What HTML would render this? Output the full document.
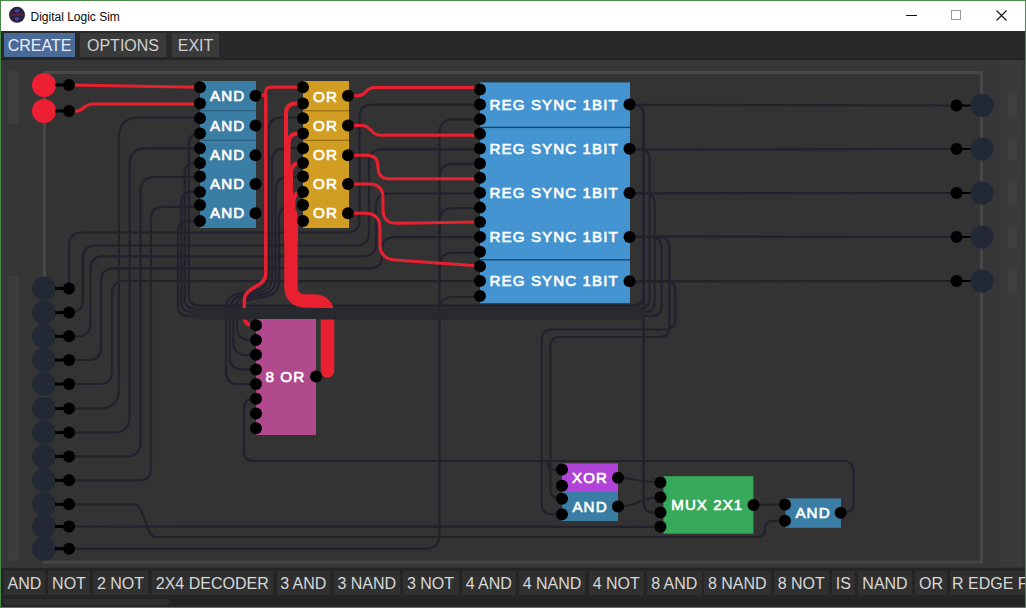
<!DOCTYPE html><html><head><meta charset="utf-8"><style>
html,body{margin:0;padding:0;width:1026px;height:608px;overflow:hidden;background:#333;font-family:"Liberation Sans",sans-serif;}
.a{position:absolute;}
.mb{position:absolute;top:33px;height:24px;background:#3a3a3a;color:#d0d0d0;font-size:16px;line-height:25px;text-align:center;}
.tb{position:absolute;top:570.5px;height:24px;background:#303030;color:#d8d8d8;font-size:16px;line-height:25px;white-space:nowrap;overflow:hidden;text-align:center;}
svg{position:absolute;left:0;top:0;}
.g{font-weight:bold;fill:#fff;font-size:14px;font-family:"Liberation Sans",sans-serif;}
</style></head><body><svg width="1026" height="608"><rect x="0" y="60" width="1026" height="507" fill="#363636"/><rect x="44.5" y="72.5" width="937" height="489.5" fill="#333333" stroke="#474747" stroke-width="3"/><rect x="9" y="72" width="9" height="25.5" fill="#3d3d3d" stroke="#444" stroke-width="0.8"/><rect x="9" y="98" width="9" height="25" fill="#3d3d3d" stroke="#444" stroke-width="0.8"/><rect x="9" y="276" width="9" height="284" fill="#3c3c3c" stroke="#424242" stroke-width="0.8"/><rect x="1000" y="60" width="22" height="507" fill="#3a3a3a"/><rect x="1008" y="94.0" width="9" height="23" rx="2" fill="#3f3f3f"/><rect x="1008" y="137.5" width="9" height="23" rx="2" fill="#3f3f3f"/><rect x="1008" y="181.5" width="9" height="23" rx="2" fill="#3f3f3f"/><rect x="1008" y="225.5" width="9" height="23" rx="2" fill="#3f3f3f"/><rect x="1008" y="269.5" width="9" height="23" rx="2" fill="#3f3f3f"/><path d="M69.0 288.4 L69.0 245.5 Q69.0 232.5 82.0 232.5 L346.5 232.5 Q359.5 232.5 359.5 219.5 L359.5 117.6 Q359.5 104.6 372.5 104.6 L480.0 104.6" fill="none" stroke="#22212d" stroke-width="2.2" stroke-linecap="round" stroke-linejoin="round"/><path d="M69.0 312.6 L70.0 312.6 Q83.0 312.6 83.0 299.6 L83.0 258.5 Q83.0 245.5 96.0 245.5 L356.0 245.5 Q369.0 245.5 369.0 232.5 L369.0 162.3 Q369.0 149.3 382.0 149.3 L480.0 149.3" fill="none" stroke="#22212d" stroke-width="2.2" stroke-linecap="round" stroke-linejoin="round"/><path d="M69.0 336.3 L77.5 336.3 Q90.5 336.3 90.5 323.3 L90.5 269.3 Q90.5 256.3 103.5 256.3 L363.0 256.3 Q376.0 256.3 376.0 243.3 L376.0 206.5 Q376.0 193.5 389.0 193.5 L480.0 193.5" fill="none" stroke="#22212d" stroke-width="2.2" stroke-linecap="round" stroke-linejoin="round"/><path d="M69.0 360.0 L88.0 360.0 Q101.0 360.0 101.0 347.0 L101.0 281.4 Q101.0 268.4 114.0 268.4 L369.0 268.4 Q382.0 268.4 382.0 255.4 L382.0 250.1 Q382.0 237.1 395.0 237.1 L480.0 237.1" fill="none" stroke="#22212d" stroke-width="2.2" stroke-linecap="round" stroke-linejoin="round"/><path d="M69.0 384.0 L99.0 384.0 Q112.0 384.0 112.0 371.0 L112.0 294.0 Q112.0 281.0 125.0 281.0 L480.0 281.1" fill="none" stroke="#22212d" stroke-width="2.2" stroke-linecap="round" stroke-linejoin="round"/><path d="M200.0 117.5 L139.0 117.5 Q119.0 117.5 119.0 137.5 L119.0 388.5 Q119.0 408.5 99.0 408.5 L69.0 408.5" fill="none" stroke="#22212d" stroke-width="2.2" stroke-linecap="round" stroke-linejoin="round"/><path d="M200.0 148.3 L145.6 148.3 Q129.6 148.3 129.6 164.3 L129.6 416.5 Q129.6 432.5 113.6 432.5 L69.0 432.5" fill="none" stroke="#22212d" stroke-width="2.2" stroke-linecap="round" stroke-linejoin="round"/><path d="M200.0 177.0 L154.5 177.0 Q140.5 177.0 140.5 191.0 L140.5 442.4 Q140.5 456.4 126.5 456.4 L69.0 456.4" fill="none" stroke="#22212d" stroke-width="2.2" stroke-linecap="round" stroke-linejoin="round"/><path d="M200.0 206.8 L163.0 206.8 Q151.0 206.8 151.0 218.8 L151.0 468.3 Q151.0 480.3 139.0 480.3 L69.0 480.3" fill="none" stroke="#22212d" stroke-width="2.2" stroke-linecap="round" stroke-linejoin="round"/><path d="M200.0 133.8 L198.8 133.8 Q188.8 133.8 188.8 143.8 L188.8 295.6 Q188.8 305.6 198.8 305.6 L633.7 305.6 Q643.7 305.6 643.7 295.6 L643.7 115.0 Q643.7 105.0 633.7 105.0 L629.5 105.0" fill="none" stroke="#22212d" stroke-width="2.2" stroke-linecap="round" stroke-linejoin="round"/><path d="M200.0 163.0 L194.7 163.0 Q184.7 163.0 184.7 173.0 L184.7 298.8 Q184.7 308.8 194.7 308.8 L639.6 308.8 Q649.6 308.8 649.6 298.8 L649.6 159.5 Q649.6 149.5 639.6 149.5 L629.5 149.5" fill="none" stroke="#22212d" stroke-width="2.2" stroke-linecap="round" stroke-linejoin="round"/><path d="M200.0 191.7 L191.4 191.7 Q181.4 191.7 181.4 201.7 L181.4 302.0 Q181.4 312.0 191.4 312.0 L644.6 312.0 Q654.6 312.0 654.6 302.0 L654.6 203.3 Q654.6 193.3 644.6 193.3 L629.5 193.3" fill="none" stroke="#22212d" stroke-width="2.2" stroke-linecap="round" stroke-linejoin="round"/><path d="M200.0 221.0 L188.0 221.0 Q178.0 221.0 178.0 231.0 L178.0 306.0 Q178.0 316.0 188.0 316.0 L651.5 316.0 Q661.5 316.0 661.5 306.0 L661.5 247.0 Q661.5 237.0 651.5 237.0 L629.5 237.0" fill="none" stroke="#22212d" stroke-width="2.2" stroke-linecap="round" stroke-linejoin="round"/><path d="M303.0 117.5 L281.5 117.5 Q268.5 117.5 268.5 130.5 L268.5 275.0 Q268.5 288.0 255.7 290.4 L238.8 293.6 Q226.0 296.0 226.0 309.0 L226.0 371.2 Q226.0 384.2 239.0 384.2 L256.0 384.2" fill="none" stroke="#22212d" stroke-width="2.2" stroke-linecap="round" stroke-linejoin="round"/><path d="M303.0 148.3 L285.0 148.3 Q272.0 148.3 272.0 161.3 L272.0 277.0 Q272.0 290.0 259.2 292.4 L242.5 295.6 Q229.7 298.0 229.7 311.0 L229.7 356.4 Q229.7 369.4 242.7 369.4 L256.0 369.4" fill="none" stroke="#22212d" stroke-width="2.2" stroke-linecap="round" stroke-linejoin="round"/><path d="M303.0 177.0 L288.5 177.0 Q275.5 177.0 275.5 190.0 L275.5 279.0 Q275.5 292.0 262.7 294.4 L246.2 297.6 Q233.4 300.0 233.4 313.0 L233.4 342.0 Q233.4 355.0 246.4 355.0 L256.0 355.0" fill="none" stroke="#22212d" stroke-width="2.2" stroke-linecap="round" stroke-linejoin="round"/><path d="M303.0 205.7 L292.0 205.7 Q279.0 205.7 279.0 218.7 L279.0 281.0 Q279.0 294.0 266.2 296.4 L249.8 299.6 Q237.0 302.0 237.0 315.0 L237.0 327.0 Q237.0 340.0 250.0 340.0 L256.0 340.0" fill="none" stroke="#22212d" stroke-width="2.2" stroke-linecap="round" stroke-linejoin="round"/><path d="M480.0 163.8 L453.5 163.8 Q439.5 163.8 439.5 177.8 L439.5 188.8" fill="none" stroke="#22212d" stroke-width="2.2" stroke-linecap="round" stroke-linejoin="round"/><path d="M480.0 208.2 L453.5 208.2 Q439.5 208.2 439.5 222.2 L439.5 233.2" fill="none" stroke="#22212d" stroke-width="2.2" stroke-linecap="round" stroke-linejoin="round"/><path d="M480.0 252.6 L453.5 252.6 Q439.5 252.6 439.5 266.6 L439.5 277.6" fill="none" stroke="#22212d" stroke-width="2.2" stroke-linecap="round" stroke-linejoin="round"/><path d="M480.0 297.0 L453.5 297.0 Q439.5 297.0 439.5 311.0 L439.5 322.0" fill="none" stroke="#22212d" stroke-width="2.2" stroke-linecap="round" stroke-linejoin="round"/><path d="M480.0 119.4 L453.5 119.4 Q439.5 119.4 439.5 133.4 L439.5 534.7 Q439.5 548.7 425.5 548.7 L69.0 548.7" fill="none" stroke="#22212d" stroke-width="2.2" stroke-linecap="round" stroke-linejoin="round"/><path d="M629.5 104.9 L956.5 105.5" fill="none" stroke="#22212d" stroke-width="2.2" stroke-linecap="round" stroke-linejoin="round"/><path d="M629.5 149.7 L956.5 149.0" fill="none" stroke="#22212d" stroke-width="2.2" stroke-linecap="round" stroke-linejoin="round"/><path d="M629.5 193.3 L956.5 193.0" fill="none" stroke="#22212d" stroke-width="2.2" stroke-linecap="round" stroke-linejoin="round"/><path d="M629.5 236.5 L956.5 237.0" fill="none" stroke="#22212d" stroke-width="2.2" stroke-linecap="round" stroke-linejoin="round"/><path d="M629.5 281.4 L956.5 281.0" fill="none" stroke="#22212d" stroke-width="2.2" stroke-linecap="round" stroke-linejoin="round"/><path d="M629.5 105.0 L633.7 105.0 Q643.7 105.0 643.7 115.0 L643.7 502.4 Q643.7 512.4 653.7 512.4 L660.5 512.4" fill="none" stroke="#22212d" stroke-width="2.2" stroke-linecap="round" stroke-linejoin="round"/><path d="M629.5 237.0 L659.4 237.0 Q669.4 237.0 669.4 247.0 L669.4 327.0 Q669.4 337.0 659.4 337.0 L560.4 337.0 Q550.4 337.0 550.4 347.0 L550.4 488.8 Q550.4 498.8 560.4 498.8 L562.0 498.8" fill="none" stroke="#22212d" stroke-width="2.2" stroke-linecap="round" stroke-linejoin="round"/><path d="M629.5 281.4 L665.3 281.4 Q675.3 281.4 675.3 291.4 L675.3 319.5 Q675.3 329.5 665.3 329.5 L551.8 329.5 Q541.8 329.5 541.8 339.5 L541.8 504.2 Q541.8 514.2 551.8 514.2 L562.0 514.2" fill="none" stroke="#22212d" stroke-width="2.2" stroke-linecap="round" stroke-linejoin="round"/><path d="M69.0 526.5 L660.5 526.8" fill="none" stroke="#22212d" stroke-width="2.2" stroke-linecap="round" stroke-linejoin="round"/><path d="M69 504.3 L134 504.3 C145.0 504.3 145.0 537 156 537 L700 537" fill="none" stroke="#22212d" stroke-width="2.2" stroke-linecap="round" stroke-linejoin="round"/><path d="M690.0 537.0 L757.0 537.0 Q765.0 537.0 765.0 529.0 L765.0 528.8 Q765.0 520.8 773.0 520.8 L785.0 520.8" fill="none" stroke="#22212d" stroke-width="2.2" stroke-linecap="round" stroke-linejoin="round"/><path d="M256.0 398.7 L254.0 398.7 Q244.0 398.7 244.0 408.7 L244.0 451.0 Q244.0 461.0 254.0 461.0 L843.5 461.0 Q853.5 461.0 853.5 471.0 L853.5 502.7 Q853.5 512.7 843.5 512.7 L840.6 512.7" fill="none" stroke="#22212d" stroke-width="2.2" stroke-linecap="round" stroke-linejoin="round"/><path d="M530.0 461.0 L543.7 461.0 Q548.0 461.0 548.0 465.3 L548.0 465.3 Q548.0 469.6 552.3 469.6 L562.0 469.6" fill="none" stroke="#22212d" stroke-width="2.2" stroke-linecap="round" stroke-linejoin="round"/><path d="M618 477.8 C635 478 640 482.4 660.5 482.4" fill="none" stroke="#22212d" stroke-width="2.2" stroke-linecap="round" stroke-linejoin="round"/><path d="M618 506.6 C640 506.6 638 497.2 660.5 497.2" fill="none" stroke="#22212d" stroke-width="2.2" stroke-linecap="round" stroke-linejoin="round"/><path d="M753.5 505.0 L785.0 504.6" fill="none" stroke="#22212d" stroke-width="2.2" stroke-linecap="round" stroke-linejoin="round"/><path d="M69.0 85.0 L200.0 87.3" fill="none" stroke="#e9202f" stroke-width="3" stroke-linecap="round" stroke-linejoin="round"/><path d="M69 111 L76 111 C84.0 111 84.0 104 92 104 L200 104" fill="none" stroke="#e9202f" stroke-width="3" stroke-linecap="round" stroke-linejoin="round"/><path d="M255.5 95.7 L261.6 95.7 Q265.8 95.7 265.8 91.5 L265.8 91.5 Q265.8 87.3 270.0 87.3 L303.0 87.3" fill="none" stroke="#e9202f" stroke-width="3" stroke-linecap="round" stroke-linejoin="round"/><path d="M265.8 95.7 L265.8 274 C265.8 287.0 244.3 287.0 244.3 300 L244.3 312" fill="none" stroke="#e9202f" stroke-width="3.5" stroke-linecap="round" stroke-linejoin="round"/><path d="M244.3 310.0 L244.3 316.3 Q244.3 325.3 253.3 325.3 L256.0 325.3" fill="none" stroke="#e9202f" stroke-width="3.5" stroke-linecap="round" stroke-linejoin="round"/><path d="M303.0 103.6 L296.0 103.6 Q286.0 103.6 286.0 113.6 L286.0 240.0" fill="none" stroke="#e9202f" stroke-width="4" stroke-linecap="round" stroke-linejoin="round"/><path d="M303.0 133.4 L298.5 133.4 Q288.5 133.4 288.5 143.4 L288.5 240.0" fill="none" stroke="#e9202f" stroke-width="4" stroke-linecap="round" stroke-linejoin="round"/><path d="M303.0 163.1 L301.0 163.1 Q291.0 163.1 291.0 173.1 L291.0 240.0" fill="none" stroke="#e9202f" stroke-width="4" stroke-linecap="round" stroke-linejoin="round"/><path d="M303.0 192.0 L303.0 192.0 Q293.5 192.0 293.5 201.5 L293.5 240.0" fill="none" stroke="#e9202f" stroke-width="4" stroke-linecap="round" stroke-linejoin="round"/><path d="M303.0 221.0 L303.0 221.0 Q296.0 221.0 296.0 228.0 L296.0 240.0" fill="none" stroke="#e9202f" stroke-width="4" stroke-linecap="round" stroke-linejoin="round"/><path d="M291 215 L291 286 Q291 301 306 301 L313 301 Q327.5 301 327.5 315 L327.5 371" fill="none" stroke="#e9202f" stroke-width="13.5" stroke-linecap="round" stroke-linejoin="round"/><path d="M196.0 313.8 L640.0 313.8" fill="none" stroke="#28282f" stroke-width="11.5" stroke-linecap="round" stroke-linejoin="round"/><path d="M348 95.7 L358 95.7 C366.0 95.7 366.0 87.5 374 87.5 L480 87.5" fill="none" stroke="#e9202f" stroke-width="3" stroke-linecap="round" stroke-linejoin="round"/><path d="M348 125.4 L362 125.4 C371.0 125.4 371.0 135.2 380 135.2 L480 135.2" fill="none" stroke="#e9202f" stroke-width="3" stroke-linecap="round" stroke-linejoin="round"/><path d="M348.0 155.3 L366.5 155.3 Q378.0 155.3 378.0 166.8 L378.0 167.2 Q378.0 178.7 389.5 178.7 L480.0 178.7" fill="none" stroke="#e9202f" stroke-width="3" stroke-linecap="round" stroke-linejoin="round"/><path d="M348.0 184.0 L369.0 184.0 Q383.0 184.0 383.0 198.0 L383.0 209.5 Q383.0 223.5 397.0 223.3 L480.0 222.0" fill="none" stroke="#e9202f" stroke-width="3" stroke-linecap="round" stroke-linejoin="round"/><path d="M348.0 213.2 L365.0 213.2 Q380.0 213.2 380.0 228.2 L380.0 244.0 Q380.0 259.0 395.0 260.0 L480.0 266.0" fill="none" stroke="#e9202f" stroke-width="3" stroke-linecap="round" stroke-linejoin="round"/><circle cx="44" cy="85" r="12" fill="#ec1f33"/><rect x="55" y="83.5" width="9" height="3" fill="#000"/><circle cx="69" cy="85" r="6" fill="#000"/><circle cx="44" cy="111" r="12" fill="#ec1f33"/><rect x="55" y="109.5" width="9" height="3" fill="#000"/><circle cx="69" cy="111" r="6" fill="#000"/><circle cx="44" cy="288.4" r="12" fill="#232934"/><rect x="55" y="286.9" width="9" height="3" fill="#000"/><circle cx="69" cy="288.4" r="6" fill="#000"/><circle cx="44" cy="312.6" r="12" fill="#232934"/><rect x="55" y="311.1" width="9" height="3" fill="#000"/><circle cx="69" cy="312.6" r="6" fill="#000"/><circle cx="44" cy="336.3" r="12" fill="#232934"/><rect x="55" y="334.8" width="9" height="3" fill="#000"/><circle cx="69" cy="336.3" r="6" fill="#000"/><circle cx="44" cy="360" r="12" fill="#232934"/><rect x="55" y="358.5" width="9" height="3" fill="#000"/><circle cx="69" cy="360" r="6" fill="#000"/><circle cx="44" cy="384" r="12" fill="#232934"/><rect x="55" y="382.5" width="9" height="3" fill="#000"/><circle cx="69" cy="384" r="6" fill="#000"/><circle cx="44" cy="408.5" r="12" fill="#232934"/><rect x="55" y="407.0" width="9" height="3" fill="#000"/><circle cx="69" cy="408.5" r="6" fill="#000"/><circle cx="44" cy="432.5" r="12" fill="#232934"/><rect x="55" y="431.0" width="9" height="3" fill="#000"/><circle cx="69" cy="432.5" r="6" fill="#000"/><circle cx="44" cy="456.4" r="12" fill="#232934"/><rect x="55" y="454.9" width="9" height="3" fill="#000"/><circle cx="69" cy="456.4" r="6" fill="#000"/><circle cx="44" cy="480.3" r="12" fill="#232934"/><rect x="55" y="478.8" width="9" height="3" fill="#000"/><circle cx="69" cy="480.3" r="6" fill="#000"/><circle cx="44" cy="504.3" r="12" fill="#232934"/><rect x="55" y="502.8" width="9" height="3" fill="#000"/><circle cx="69" cy="504.3" r="6" fill="#000"/><circle cx="44" cy="526.5" r="12" fill="#232934"/><rect x="55" y="525.0" width="9" height="3" fill="#000"/><circle cx="69" cy="526.5" r="6" fill="#000"/><circle cx="44" cy="548.7" r="12" fill="#232934"/><rect x="55" y="547.2" width="9" height="3" fill="#000"/><circle cx="69" cy="548.7" r="6" fill="#000"/><rect x="960" y="104.5" width="14" height="2" fill="#000"/><circle cx="982" cy="105.5" r="11.5" fill="#232934"/><circle cx="956.5" cy="105.5" r="6" fill="#000"/><rect x="960" y="148" width="14" height="2" fill="#000"/><circle cx="982" cy="149" r="11.5" fill="#232934"/><circle cx="956.5" cy="149" r="6" fill="#000"/><rect x="960" y="192" width="14" height="2" fill="#000"/><circle cx="982" cy="193" r="11.5" fill="#232934"/><circle cx="956.5" cy="193" r="6" fill="#000"/><rect x="960" y="236" width="14" height="2" fill="#000"/><circle cx="982" cy="237" r="11.5" fill="#232934"/><circle cx="956.5" cy="237" r="6" fill="#000"/><rect x="960" y="280" width="14" height="2" fill="#000"/><circle cx="982" cy="281" r="11.5" fill="#232934"/><circle cx="956.5" cy="281" r="6" fill="#000"/><rect x="200" y="81" width="56" height="147" fill="#3b7ea5"/><text class="g" x="210.0" y="101.1" textLength="35.3" lengthAdjust="spacingAndGlyphs" style="font-size:13.8px;font-weight:normal;letter-spacing:1px" stroke="#fff" stroke-width="0.6">AND</text><text class="g" x="210.0" y="130.6" textLength="35.3" lengthAdjust="spacingAndGlyphs" style="font-size:13.8px;font-weight:normal;letter-spacing:1px" stroke="#fff" stroke-width="0.6">AND</text><text class="g" x="210.0" y="160.3" textLength="35.3" lengthAdjust="spacingAndGlyphs" style="font-size:13.8px;font-weight:normal;letter-spacing:1px" stroke="#fff" stroke-width="0.6">AND</text><text class="g" x="210.0" y="189.3" textLength="35.3" lengthAdjust="spacingAndGlyphs" style="font-size:13.8px;font-weight:normal;letter-spacing:1px" stroke="#fff" stroke-width="0.6">AND</text><text class="g" x="210.0" y="218.4" textLength="35.3" lengthAdjust="spacingAndGlyphs" style="font-size:13.8px;font-weight:normal;letter-spacing:1px" stroke="#fff" stroke-width="0.6">AND</text><rect x="200" y="110.10000000000001" width="56" height="1.3" fill="#2c5f80" opacity="1"/><rect x="200" y="139.70000000000002" width="56" height="1.3" fill="#2c5f80" opacity="1"/><circle cx="200" cy="87.3" r="6" fill="#000"/><circle cx="200" cy="103.4" r="6" fill="#000"/><circle cx="200" cy="118.2" r="6" fill="#000"/><circle cx="200" cy="133.4" r="6" fill="#000"/><circle cx="200" cy="148.2" r="6" fill="#000"/><circle cx="200" cy="163.1" r="6" fill="#000"/><circle cx="200" cy="176.5" r="6" fill="#000"/><circle cx="200" cy="192" r="6" fill="#000"/><circle cx="200" cy="205" r="6" fill="#000"/><circle cx="200" cy="221" r="6" fill="#000"/><circle cx="255.5" cy="95.8" r="6" fill="#000"/><circle cx="255.5" cy="125.4" r="6" fill="#000"/><circle cx="255.5" cy="155.3" r="6" fill="#000"/><circle cx="255.5" cy="184" r="6" fill="#000"/><circle cx="255.5" cy="213.2" r="6" fill="#000"/><rect x="303" y="81" width="46" height="147" fill="#d19d22"/><text class="g" x="313.1" y="101.5" textLength="25" lengthAdjust="spacingAndGlyphs" style="font-size:13.8px;font-weight:normal;letter-spacing:1px" stroke="#fff" stroke-width="0.6">OR</text><text class="g" x="313.1" y="130.6" textLength="25" lengthAdjust="spacingAndGlyphs" style="font-size:13.8px;font-weight:normal;letter-spacing:1px" stroke="#fff" stroke-width="0.6">OR</text><text class="g" x="313.1" y="160.3" textLength="25" lengthAdjust="spacingAndGlyphs" style="font-size:13.8px;font-weight:normal;letter-spacing:1px" stroke="#fff" stroke-width="0.6">OR</text><text class="g" x="313.1" y="189.3" textLength="25" lengthAdjust="spacingAndGlyphs" style="font-size:13.8px;font-weight:normal;letter-spacing:1px" stroke="#fff" stroke-width="0.6">OR</text><text class="g" x="313.1" y="218.4" textLength="25" lengthAdjust="spacingAndGlyphs" style="font-size:13.8px;font-weight:normal;letter-spacing:1px" stroke="#fff" stroke-width="0.6">OR</text><rect x="303" y="110.10000000000001" width="46" height="1.3" fill="#9c7418" opacity="1"/><rect x="303" y="139.70000000000002" width="46" height="1.3" fill="#9c7418" opacity="1"/><circle cx="303" cy="87.3" r="6" fill="#000"/><circle cx="303" cy="103.4" r="6" fill="#000"/><circle cx="303" cy="118.2" r="6" fill="#000"/><circle cx="303" cy="133.4" r="6" fill="#000"/><circle cx="303" cy="148.2" r="6" fill="#000"/><circle cx="303" cy="163.1" r="6" fill="#000"/><circle cx="303" cy="176.5" r="6" fill="#000"/><circle cx="303" cy="192" r="6" fill="#000"/><circle cx="303" cy="205" r="6" fill="#000"/><circle cx="303" cy="221" r="6" fill="#000"/><circle cx="348" cy="95.8" r="6" fill="#000"/><circle cx="348" cy="125.4" r="6" fill="#000"/><circle cx="348" cy="155.3" r="6" fill="#000"/><circle cx="348" cy="184" r="6" fill="#000"/><circle cx="348" cy="213.2" r="6" fill="#000"/><rect x="480" y="82.4" width="150" height="220.8" fill="#4394d0"/><text class="g" x="489.6" y="109.7" textLength="129.2" lengthAdjust="spacingAndGlyphs" style="font-size:13.8px;font-weight:normal;letter-spacing:1px" stroke="#fff" stroke-width="0.6">REG SYNC 1BIT</text><circle cx="480" cy="89.5" r="6" fill="#000"/><circle cx="480" cy="104.4" r="6" fill="#000"/><circle cx="480" cy="119.3" r="6" fill="#000"/><circle cx="629.5" cy="104.60000000000001" r="6" fill="#000"/><text class="g" x="489.6" y="153.9" textLength="129.2" lengthAdjust="spacingAndGlyphs" style="font-size:13.8px;font-weight:normal;letter-spacing:1px" stroke="#fff" stroke-width="0.6">REG SYNC 1BIT</text><rect x="480" y="126.7" width="150" height="1.4" fill="#1f4668"/><circle cx="480" cy="133.66" r="6" fill="#000"/><circle cx="480" cy="148.56" r="6" fill="#000"/><circle cx="480" cy="163.46" r="6" fill="#000"/><circle cx="629.5" cy="148.76" r="6" fill="#000"/><text class="g" x="489.6" y="198.1" textLength="129.2" lengthAdjust="spacingAndGlyphs" style="font-size:13.8px;font-weight:normal;letter-spacing:1px" stroke="#fff" stroke-width="0.6">REG SYNC 1BIT</text><circle cx="480" cy="177.82" r="6" fill="#000"/><circle cx="480" cy="192.72" r="6" fill="#000"/><circle cx="480" cy="207.62" r="6" fill="#000"/><circle cx="629.5" cy="192.92" r="6" fill="#000"/><text class="g" x="489.6" y="242.2" textLength="129.2" lengthAdjust="spacingAndGlyphs" style="font-size:13.8px;font-weight:normal;letter-spacing:1px" stroke="#fff" stroke-width="0.6">REG SYNC 1BIT</text><circle cx="480" cy="221.98" r="6" fill="#000"/><circle cx="480" cy="236.88" r="6" fill="#000"/><circle cx="480" cy="251.78" r="6" fill="#000"/><circle cx="629.5" cy="237.07999999999998" r="6" fill="#000"/><text class="g" x="489.6" y="286.4" textLength="129.2" lengthAdjust="spacingAndGlyphs" style="font-size:13.8px;font-weight:normal;letter-spacing:1px" stroke="#fff" stroke-width="0.6">REG SYNC 1BIT</text><rect x="480" y="259.1" width="150" height="1.4" fill="#1f4668"/><circle cx="480" cy="266.14" r="6" fill="#000"/><circle cx="480" cy="281.03999999999996" r="6" fill="#000"/><circle cx="480" cy="295.94" r="6" fill="#000"/><circle cx="629.5" cy="281.23999999999995" r="6" fill="#000"/><rect x="256" y="319" width="60" height="116" fill="#b04a8c"/><text class="g" x="265.4" y="382.0" textLength="40" lengthAdjust="spacingAndGlyphs" style="font-size:13.8px;font-weight:normal;letter-spacing:1px" stroke="#fff" stroke-width="0.6">8 OR</text><circle cx="256" cy="325.3" r="6" fill="#000"/><circle cx="256" cy="340.0" r="6" fill="#000"/><circle cx="256" cy="354.7" r="6" fill="#000"/><circle cx="256" cy="369.4" r="6" fill="#000"/><circle cx="256" cy="384.1" r="6" fill="#000"/><circle cx="256" cy="398.8" r="6" fill="#000"/><circle cx="256" cy="413.5" r="6" fill="#000"/><circle cx="256" cy="428.2" r="6" fill="#000"/><circle cx="316" cy="376.4" r="6" fill="#000"/><rect x="562" y="463.4" width="56" height="28.6" fill="#b043d8"/><rect x="562" y="492" width="56" height="29" fill="#3b7ea5"/><text class="g" x="572.1" y="482.8" textLength="35.8" lengthAdjust="spacingAndGlyphs" style="font-size:13.8px;font-weight:normal;letter-spacing:1px" stroke="#fff" stroke-width="0.6">XOR</text><text class="g" x="572.4" y="511.6" textLength="35.3" lengthAdjust="spacingAndGlyphs" style="font-size:13.8px;font-weight:normal;letter-spacing:1px" stroke="#fff" stroke-width="0.6">AND</text><circle cx="562" cy="469.6" r="6" fill="#000"/><circle cx="562" cy="485.8" r="6" fill="#000"/><circle cx="562" cy="498.8" r="6" fill="#000"/><circle cx="562" cy="514.2" r="6" fill="#000"/><circle cx="618" cy="477.8" r="6" fill="#000"/><circle cx="618" cy="506.6" r="6" fill="#000"/><rect x="663.4" y="476.2" width="90" height="57.5" fill="#36a95b"/><text class="g" x="671.3" y="510.2" textLength="72" lengthAdjust="spacingAndGlyphs" style="font-size:13.8px;font-weight:normal;letter-spacing:1px" stroke="#fff" stroke-width="0.6">MUX 2X1</text><circle cx="660.5" cy="482.4" r="6" fill="#000"/><circle cx="660.5" cy="497.2" r="6" fill="#000"/><circle cx="660.5" cy="512.4" r="6" fill="#000"/><circle cx="660.5" cy="526.8" r="6" fill="#000"/><circle cx="753.5" cy="505" r="6" fill="#000"/><rect x="785.5" y="498.4" width="55.5" height="29.4" fill="#3b7ea5"/><text class="g" x="795.4" y="518.1" textLength="35.3" lengthAdjust="spacingAndGlyphs" style="font-size:13.8px;font-weight:normal;letter-spacing:1px" stroke="#fff" stroke-width="0.6">AND</text><circle cx="785" cy="504.6" r="6" fill="#000"/><circle cx="785" cy="520.8" r="6" fill="#000"/><circle cx="840.6" cy="512.7" r="6" fill="#000"/></svg>
<div class="a" style="left:0;top:0;width:1026px;height:31px;background:#fff"></div>
<svg width="1026" height="31">
  <circle cx="17" cy="14.8" r="8" fill="#2a2340"/>
  <ellipse cx="17" cy="10.8" rx="2.2" ry="1.6" fill="#5040b0"/>
  <ellipse cx="17" cy="18.8" rx="2.2" ry="1.6" fill="#5040b0"/>
  <rect x="11" y="14.3" width="12" height="1" fill="#7a2a48"/>
  <rect x="906" y="15" width="11" height="1" fill="#111"/>
  <rect x="951.5" y="10.5" width="9" height="9" fill="none" stroke="#999" stroke-width="1"/>
  <path d="M996.5 10.5 L1006.5 20.5 M1006.5 10.5 L996.5 20.5" stroke="#111" stroke-width="1.1"/>
</svg>
<div class="a" style="left:30.5px;top:9.5px;font-size:12px;color:#0a0a0a;">Digital Logic Sim</div>
<div class="a" style="left:0;top:31px;width:1026px;height:29px;background:#29292b"></div><div class="a" style="left:0;top:57.5px;width:1026px;height:2.5px;background:#252527"></div>
<div class="mb" style="left:4px;width:71px;background:#4a6a98;color:#eef;">CREATE</div>
<div class="mb" style="left:80px;width:86px;">OPTIONS</div>
<div class="mb" style="left:172px;width:47px;">EXIT</div>
<div class="a" style="left:0;top:567.5px;width:1026px;height:41px;background:#252525"></div><div class="tb" style="left:4px;width:41px">AND</div><div class="tb" style="left:48px;width:42px">NOT</div><div class="tb" style="left:93px;width:55px">2 NOT</div><div class="tb" style="left:151.5px;width:121.5px">2X4 DECODER</div><div class="tb" style="left:276.5px;width:53.5px">3 AND</div><div class="tb" style="left:334px;width:65.5px">3 NAND</div><div class="tb" style="left:402.5px;width:56.0px">3 NOT</div><div class="tb" style="left:461.5px;width:54.5px">4 AND</div><div class="tb" style="left:519px;width:66px">4 NAND</div><div class="tb" style="left:588.5px;width:55.5px">4 NOT</div><div class="tb" style="left:647px;width:54.5px">8 AND</div><div class="tb" style="left:704px;width:66.5px">8 NAND</div><div class="tb" style="left:773.5px;width:55.5px">8 NOT</div><div class="tb" style="left:832px;width:22.5px">IS</div><div class="tb" style="left:858px;width:54px">NAND</div><div class="tb" style="left:915px;width:32px">OR</div><div class="tb" style="left:949.5px;width:80.5px">R EDGE F</div><div class="a" style="left:4px;top:598px;width:1018px;height:7px;background:#232323"></div><div class="a" style="left:4px;top:598.5px;width:165px;height:6px;border-radius:2px;background:#2f2f2f"></div>
<div class="a" style="left:0;top:0;width:1026px;height:1px;background:#478a47"></div>
<div class="a" style="left:0;top:607px;width:1026px;height:1px;background:#478a47"></div>
<div class="a" style="left:0;top:0;width:1px;height:608px;background:#478a47"></div>
<div class="a" style="left:1025px;top:0;width:1px;height:608px;background:#478a47"></div>
</body></html>
